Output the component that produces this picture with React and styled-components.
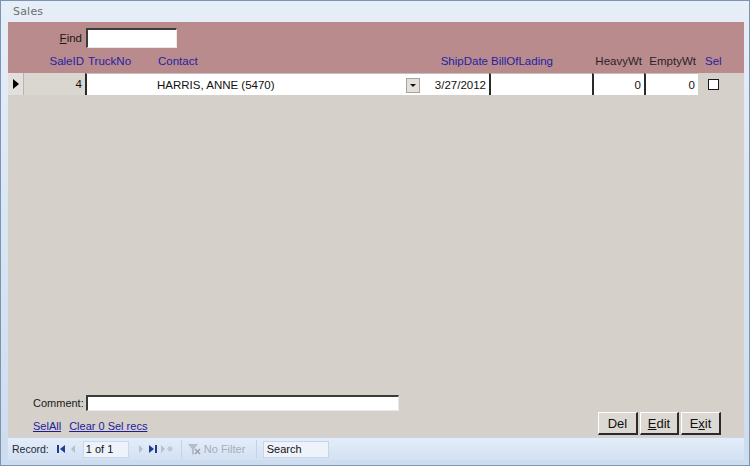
import React from "react"
import styled, { createGlobalStyle } from "styled-components"

const Global = createGlobalStyle`
  html, body { margin: 0; padding: 0; background: #ffffff; }
  body { font-family: "Liberation Sans", Arial, sans-serif; }
`

const COLS = "16px 61px 69px 267px 68px 103px 52px 54px 1fr"

const Window = styled.div`
  width: 750px;
  height: 466px;
  box-sizing: border-box;
  display: flex;
  flex-direction: column;
  background: linear-gradient(#e6eef8, #cddcee);
  border: 1px solid #7d93b2;
  padding: 0 5px 5px 7px;
`

const TitleBar = styled.div`
  height: 21px;
  display: flex;
  align-items: center;
  padding-left: 5px;
  font-size: 11px;
  color: #6e6e6e;
  font-family: "DejaVu Sans", sans-serif;
  letter-spacing: 0.2px;
`

const Content = styled.div`
  flex: 1;
  display: flex;
  flex-direction: column;
  background: #d5d0c9;
  font-size: 11.5px;
  min-height: 0;
`

const Header = styled.div`
  height: 51px;
  background: #b98b8c;
  display: flex;
  flex-direction: column;
`

const FindRow = styled.div`
  display: flex;
  align-items: center;
  height: 28px;
  padding-top: 3px;
  box-sizing: border-box;
`

const FindLabel = styled.span`
  width: 74px;
  text-align: right;
  color: #1a1a1a;
  u { text-decoration: underline; }
`

const TextBox = styled.div`
  box-sizing: border-box;
  background: #ffffff;
  border-top: 2px solid #3b3b3b;
  border-left: 2px solid #3b3b3b;
  border-right: 1px solid #e8e8e8;
  border-bottom: 1px solid #e8e8e8;
  width: ${(p) => p.$w}px;
  height: ${(p) => p.$h}px;
`

const FindBox = styled(TextBox)`
  margin-left: 4px;
`

const Grid = styled.div`
  display: grid;
  grid-template-columns: ${COLS};
  height: ${(p) => p.$h}px;
  align-items: ${(p) => p.$align || "stretch"};
`

const ColLabel = styled.div`
  color: ${(p) => (p.$dark ? "#2b1f2b" : "#2222a8")};
  text-align: ${(p) => (p.$right ? "right" : "left")};
  padding: ${(p) => p.$pad || "0"};
  white-space: nowrap;
  line-height: 14px;
  padding-bottom: 5px;
`

const Selector = styled.div`
  background: #e2e0dc;
  border-right: 1px solid #b9b5ae;
  display: flex;
  align-items: center;
  justify-content: center;
  box-sizing: border-box;
`

const Arrow = styled.div`
  width: 0;
  height: 0;
  border-top: 5px solid transparent;
  border-bottom: 5px solid transparent;
  border-left: 6px solid #000000;
`

const Cell = styled.div`
  box-sizing: border-box;
  display: flex;
  align-items: center;
  justify-content: ${(p) => (p.$right ? "flex-end" : "flex-start")};
  padding: 0 ${(p) => (p.$right ? "3px" : "0")} 0 ${(p) => p.$pl || 0}px;
  background: ${(p) => (p.$gray ? "#dad6d0" : "#ffffff")};
  border-left: ${(p) => (p.$sunk ? "2px solid #2a2a2a" : "none")};
  border-top: ${(p) => (p.$gray ? "none" : "1px solid #c4c0ba")};
  color: #111111;
  white-space: nowrap;
  position: relative;
`

const Drop = styled.div`
  position: absolute;
  right: 1px;
  top: 4px;
  width: 14px;
  height: 15px;
  box-sizing: border-box;
  background: #e4e1dc;
  border: 1px solid #a7a39c;
  display: flex;
  align-items: center;
  justify-content: center;
  &::after {
    content: "";
    border-left: 3px solid transparent;
    border-right: 3px solid transparent;
    border-top: 3px solid #111;
  }
`

const SelCell = styled.div`
  display: flex;
  align-items: center;
  padding-left: 10px;
`

const Check = styled.div`
  width: 9px;
  height: 9px;
  background: #ffffff;
  border: 1px solid #1a1a1a;
`

const Body = styled.div`
  flex: 1;
  display: flex;
  flex-direction: column;
  justify-content: flex-end;
  padding: 0 0 2px 0;
`

const Footer = styled.div`
  display: flex;
  align-items: flex-end;
  justify-content: space-between;
  padding-right: 23px;
`

const FooterLeft = styled.div`
  display: flex;
  flex-direction: column;
  gap: 9px;
  padding-left: 25px;
  padding-bottom: 3px;
`

const CommentRow = styled.div`
  display: flex;
  align-items: center;
  font-size: 11px;
  color: #1a1a1a;
`

const CommentLabel = styled.span`
  width: 53px;
`

const Links = styled.div`
  display: flex;
  gap: 8px;
  font-size: 11px;
`

const Link = styled.a`
  color: #1c1c9e;
  text-decoration: underline;
`

const Buttons = styled.div`
  display: flex;
  gap: 2px;
`

const Button = styled.div`
  width: ${(p) => p.$w}px;
  height: 23px;
  box-sizing: border-box;
  display: flex;
  align-items: center;
  justify-content: center;
  background: #dcd9d4;
  border-top: 1px solid #ffffff;
  border-left: 1px solid #ffffff;
  border-right: 2px solid #2a2a2a;
  border-bottom: 2px solid #2a2a2a;
  font-size: 13px;
  color: #111;
`

const NavBar = styled.div`
  height: 22px;
  display: flex;
  align-items: center;
  background: linear-gradient(#e4edf9, #d3e1f3);
  border-top: 1px solid #c6d5ea;
  font-size: 10.5px;
  color: #1e2a3a;
  padding-left: 4px;
`

const NavText = styled.span`
  margin-right: 6px;
`

const NavIcon = styled.span`
  display: inline-flex;
  align-items: center;
  justify-content: center;
  width: ${(p) => p.$w || 12}px;
  height: 16px;
`

const PosBox = styled.div`
  width: 46px;
  height: 17px;
  box-sizing: border-box;
  background: #eef3fb;
  border: 1px solid #cbd8ea;
  display: flex;
  align-items: center;
  padding-left: 2px;
  color: #111;
  font-size: 11px;
  margin: 0 6px 0 4px;
`

const FilterBtn = styled.div`
  height: 18px;
  box-sizing: border-box;
  width: 76px;
  display: flex;
  align-items: center;
  gap: 3px;
  padding-left: 5px;
  border-left: 1px solid #c2d2e8;
  border-right: 1px solid #c2d2e8;
  color: #a6adb8;
  font-size: 11px;
  margin-left: 6px;
`

const SearchBox = styled.div`
  width: 66px;
  height: 17px;
  box-sizing: border-box;
  border: 1px solid #c7d5e8;
  background: #eef3fb;
  display: flex;
  align-items: center;
  padding-left: 3px;
  color: #111;
  font-size: 11px;
  margin-left: 6px;
`

const First = ({ c }) => (
  <svg width="10" height="10" viewBox="0 0 10 10">
    <rect x="1" y="1" width="2" height="8" fill={c} />
    <path d="M9 1 L4 5 L9 9 Z" fill={c} />
  </svg>
)
const Last = ({ c }) => (
  <svg width="10" height="10" viewBox="0 0 10 10">
    <path d="M1 1 L6 5 L1 9 Z" fill={c} />
    <rect x="7" y="1" width="2" height="8" fill={c} />
  </svg>
)
const Tri = ({ c, left }) => (
  <svg width="8" height="10" viewBox="0 0 8 10">
    <path d={left ? "M6 1 L2 5 L6 9 Z" : "M2 1 L6 5 L2 9 Z"} fill={c} />
  </svg>
)
const NewRec = ({ c }) => (
  <svg width="14" height="10" viewBox="0 0 14 10">
    <path d="M1 1 L5 5 L1 9 Z" fill={c} />
    <path d="M10 2 V8 M7 5 H13 M8 3 L12 7 M12 3 L8 7" stroke={c} strokeWidth="1" />
  </svg>
)
const Funnel = () => (
  <svg width="14" height="13" viewBox="0 0 14 13">
    <path d="M1 1 H11 L7 6 V11 L5 12 V6 Z" fill="#b7bcc6" />
    <path d="M8 6 L13 11 M13 6 L8 11" stroke="#9aa2ae" strokeWidth="1.6" />
  </svg>
)

export default function App() {
  return (
    <>
      <Global />
      <Window>
        <TitleBar>Sales</TitleBar>
        <Content>
          <Header>
            <FindRow>
              <FindLabel>
                <u>F</u>ind
              </FindLabel>
              <FindBox $w={91} $h={20} />
            </FindRow>
            <Grid $h={23} $align="end">
              <div />
              <ColLabel $right $pad="0 1px 0 0">SaleID</ColLabel>
              <ColLabel $pad="0 0 0 3px">TruckNo</ColLabel>
              <ColLabel $pad="0 0 0 4px">Contact</ColLabel>
              <ColLabel $right $pad="0 1px 0 0">ShipDate</ColLabel>
              <ColLabel $pad="0 0 0 2px">BillOfLading</ColLabel>
              <ColLabel $right $dark $pad="0 2px 0 0">HeavyWt</ColLabel>
              <ColLabel $right $dark $pad="0 2px 0 0">EmptyWt</ColLabel>
              <ColLabel $pad="0 0 0 7px">Sel</ColLabel>
            </Grid>
          </Header>
          <Grid $h={22}>
            <Selector>
              <Arrow />
            </Selector>
            <Cell $gray $right>4</Cell>
            <Cell $sunk />
            <Cell $pl={3}>
              HARRIS, ANNE (5470)
              <Drop />
            </Cell>
            <Cell $right>3/27/2012</Cell>
            <Cell $sunk />
            <Cell $sunk $right>0</Cell>
            <Cell $sunk $right>0</Cell>
            <SelCell>
              <Check />
            </SelCell>
          </Grid>
          <Body>
            <Footer>
              <FooterLeft>
                <CommentRow>
                  <CommentLabel>Comment:</CommentLabel>
                  <TextBox $w={313} $h={16} />
                </CommentRow>
                <Links>
                  <Link>SelAll</Link>
                  <Link>Clear 0 Sel recs</Link>
                </Links>
              </FooterLeft>
              <Buttons>
                <Button $w={40}>Del</Button>
                <Button $w={39}>
                  <span><u>E</u>dit</span>
                </Button>
                <Button $w={40}>
                  <span>E<u>x</u>it</span>
                </Button>
              </Buttons>
            </Footer>
          </Body>
          <NavBar>
            <NavText>Record:</NavText>
            <NavIcon>
              <First c="#1d3d8f" />
            </NavIcon>
            <NavIcon>
              <Tri c="#b5c0d0" left />
            </NavIcon>
            <PosBox>1 of 1</PosBox>
            <NavIcon>
              <Tri c="#b5c0d0" />
            </NavIcon>
            <NavIcon>
              <Last c="#1d3d8f" />
            </NavIcon>
            <NavIcon $w={16}>
              <NewRec c="#b5c0d0" />
            </NavIcon>
            <FilterBtn>
              <Funnel />
              No Filter
            </FilterBtn>
            <SearchBox>Search</SearchBox>
          </NavBar>
        </Content>
      </Window>
    </>
  )
}
